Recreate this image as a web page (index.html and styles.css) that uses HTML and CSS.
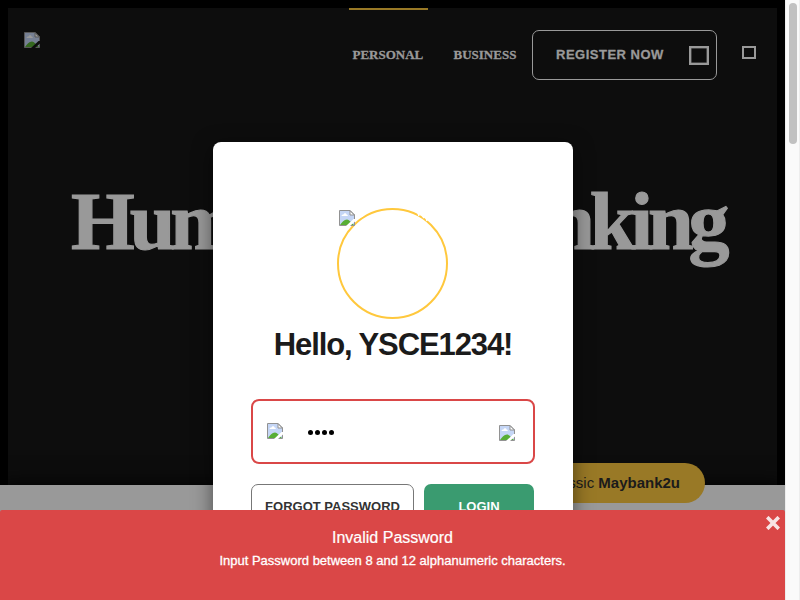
FILE: index.html
```html
<!DOCTYPE html>
<html lang="en">
<head>
<meta charset="utf-8">
<title>Login</title>
<link rel="stylesheet" href="styles.css">
</head>
<body>
<svg width="0" height="0" class="defs">
  <symbol id="broken" viewBox="0 0 16 16">
    <path d="M.5 .5H11L15.5 5V15.5H.5Z" fill="#c5d6f6"/>
    <path d="M2.5 6C2.5 4.5 4 4.5 4.5 4.5C5 2.5 7.5 3 7.5 4.5C9 4.5 9 6 8.5 6Z" fill="#fff"/>
    <path d="M1 15C3 12 5 9.5 8 9.5C10 9.5 12 12 15 15Z" fill="#58ae35"/>
    <path d="M11 .5V5H15.5Z" fill="#fff" stroke="#929292"/>
    <path d="M.5 .5H11L15.5 5V15.5H.5Z" fill="none" stroke="#929292"/>
    <path d="M7 16L14.5 9H16V11.5L11 16Z" class="tear"/>
  </symbol>
</svg>
<div class="screen">
  <div class="page">
    <section class="hero">
      <header class="nav">
        <svg class="icon logo"><use href="#broken"/></svg>
        <a class="link active"><span>PERSONAL</span></a>
        <a class="link business"><span>BUSINESS</span></a>
        <a class="register"><span>REGISTER NOW</span><i class="box large"></i></a>
        <i class="box small"></i>
      </header>
      <h1>Humanising Banking</h1>
    </section>
    <section class="below"></section>
    <a class="classic"><span>Go to classic <b>Maybank2u</b></span></a>
    <div class="modal">
      <div class="phrase">
        <svg class="icon"><use href="#broken"/></svg>
        <svg class="nicks" viewBox="0 0 111 111"><path d="M24 9l3-2M81 5l1 3M85 7l2 3M89 9l1 4"/></svg>
      </div>
      <h2><span>Hello, YSCE1234!</span></h2>
      <div class="field">
        <svg class="icon lock"><use href="#broken"/></svg>
        <div class="dots"><i></i><i></i><i></i><i></i></div>
        <svg class="icon eye"><use href="#broken"/></svg>
      </div>
      <div class="actions">
        <button class="forgot"><span>FORGOT PASSWORD</span></button>
        <button class="login"><span>LOGIN</span></button>
      </div>
    </div>
    <div class="alert">
      <svg class="close" viewBox="0 0 14 14"><path d="M1.2 1.2L12.8 12.8M12.8 1.2L1.2 12.8"/></svg>
      <div class="title"><span>Invalid Password</span></div>
      <div class="message"><span>Input Password between 8 and 12 alphanumeric characters.</span></div>
    </div>
  </div>
  <div class="scrollbar"><div class="thumb"></div></div>
</div>
</body>
</html>
```
FILE: styles.css
```css
* { box-sizing: border-box; }
body { margin: 0; font-family: "Liberation Sans", Arial, sans-serif; overflow: hidden; }
.defs { position: absolute; }
.screen { display: flex; width: 800px; height: 600px; }
.page { position: relative; width: 785px; height: 600px; overflow: hidden; background: #000; }
.hero { height: 485px; padding: 8px 8px 0; background: linear-gradient(#0d0d0d, #0d0d0d) 8px 8px / 769px 477px no-repeat; }
.nav { display: flex; align-items: flex-start; height: 132px; padding-left: 16px; color: #999; }
.icon { display: block; width: 16px; height: 16px; flex: none; }
.tear { fill: var(--tear, #fff); }
.logo { --tear: #161616; margin: 24px 309px 0 0; filter: brightness(.6); }
.link { width: 79px; height: 92px; padding: 39px 0 0 3.5px; font: bold 13px/15px "Liberation Serif", serif; letter-spacing: 0; white-space: nowrap; -webkit-text-stroke: .3px #999; }
.active { border-top: 2px solid #997926; padding-top: 37px; }
.business { margin-left: 22px; }
.register { display: flex; align-items: center; width: 185px; height: 50px; margin: 22px 0 0 3px; padding-left: 23px; border: 1px solid #999; border-radius: 7px; font: bold 13px/15px "Liberation Sans", sans-serif; letter-spacing: .5px; -webkit-text-stroke: .3px #999; }
.register span { width: 132.5px; padding-bottom: 2px; white-space: nowrap; }
.box { display: block; border: 2px solid #999; }
.large { width: 20px; height: 19px; box-shadow: inset 0 0 0 .5px #777; }
.small { width: 14px; height: 13px; margin: 38px 0 0 25px; }
h1 { margin: 33px 0 0 63px; font: bold 82px/98px "Liberation Serif", serif; letter-spacing: -5.1px; white-space: nowrap; color: #999; -webkit-text-stroke: 1.2px #999; }
.below { height: 115px; background: #999; box-shadow: 0 0 20px #000; }
.classic { position: absolute; right: 80px; top: 463px; width: 200px; height: 40px; padding-right: 25px; border-radius: 20px; background: #997926; color: #1b1b1b; font-size: 15px; line-height: 40px; text-align: right; white-space: nowrap; }
.modal { position: absolute; left: 213px; top: 142px; width: 360px; height: 440px; padding: 66px 38px 0; border-radius: 8px; background: #fff; box-shadow: 0 5px 20px rgba(0,0,0,.5); }
.phrase { position: relative; width: 111px; height: 111px; margin: 0 0 0 86px; border: 2px solid #ffc83d; border-radius: 50%; }
.nicks { position: absolute; left: -2px; top: -2px; width: 111px; height: 111px; stroke: #fff; stroke-width: 1.5; }
h2 { margin: 8px 0 0; font-size: 31px; line-height: 36px; text-align: center; white-space: nowrap; letter-spacing: -1.1px; color: #1b1b1b; }
.field { display: flex; align-items: center; width: 284px; height: 65px; margin-top: 36px; padding: 0 18px 0 14px; border: 2px solid #da4747; border-radius: 8px; }
.lock { margin-bottom: 2px; }
.dots { display: flex; gap: 2px; margin: 2px auto 0 25px; }
.dots i { width: 5px; height: 5px; border-radius: 50%; background: #000; }
.eye { margin-top: 2px; }
.actions { display: flex; gap: 10px; margin-top: 20px; }
button { height: 46px; padding: 0 0 2px; border-radius: 7px; font: bold 13px/15px "Liberation Sans", sans-serif; white-space: nowrap; }
.forgot { width: 163px; border: 1px solid #777; background: #fff; color: #333; }
.login { width: 110px; border: 0; background: #3a9b70; color: #fff; }
.alert { position: absolute; left: 0; top: 510px; width: 785px; height: 90px; padding-top: 18px; border-radius: 2px 2px 0 0; background: #da4747; color: #fff; text-align: center; }
.close { position: absolute; right: 5px; top: 6px; width: 14px; height: 14px; stroke: #f8e4e4; stroke-width: 3.7; }
.title { font-size: 16px; line-height: 19px; -webkit-text-stroke: .2px #fff; }
.message { margin-top: 6px; font-size: 13px; line-height: 15px; -webkit-text-stroke: .3px #fff; }
.scrollbar { width: 15px; background: #fafafa; border-left: 1px solid #ededed; border-right: 1px solid #ededed; padding: 3px 0 0 3px; }
.thumb { width: 8px; height: 141px; border-radius: 4px; background: #c1c1c1; }
```
